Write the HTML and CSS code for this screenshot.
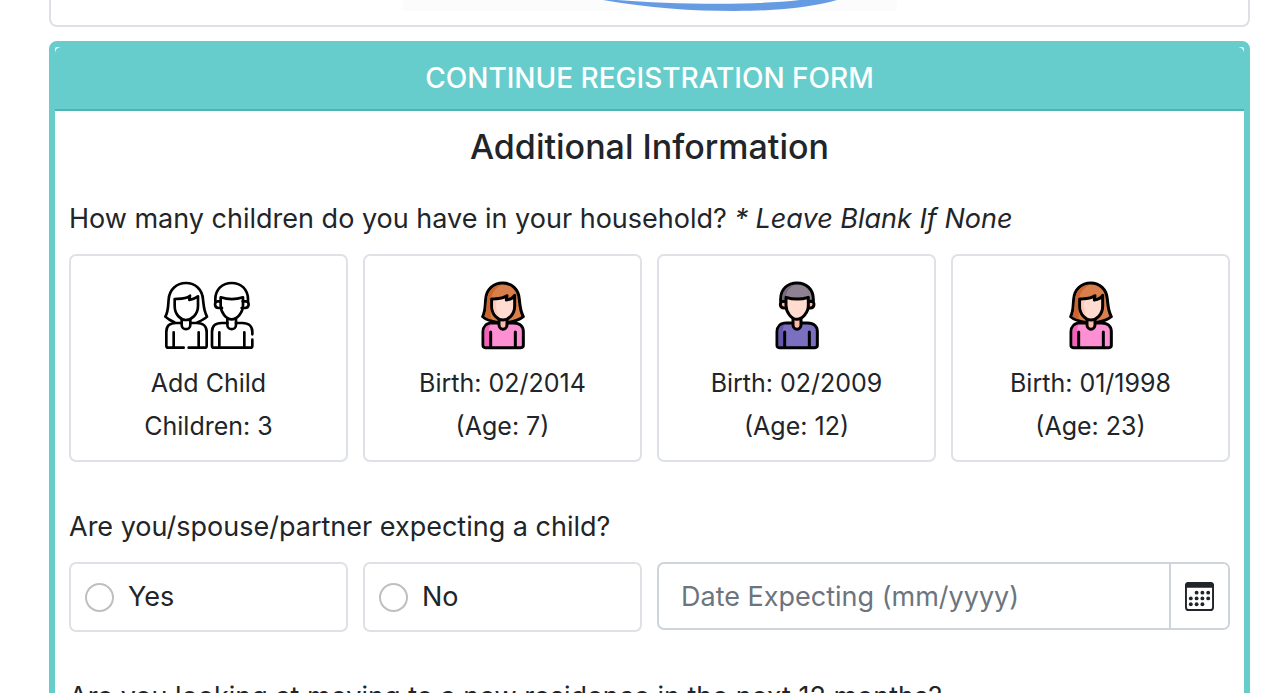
FILE: index.html
```html
<!DOCTYPE html>
<html lang="en">
<head>
  <meta charset="UTF-8">
  <meta name="viewport" content="width=device-width, initial-scale=1.0">
  <title>Continue Registration Form</title>
  <link rel="stylesheet" href="styles.css">
</head>
<body>
  <svg class="sprite" aria-hidden="true">
    <symbol id="girl" viewBox="0 0 132 210">
      <g stroke="#000" stroke-width="9" stroke-linecap="round" stroke-linejoin="round">
        <path fill="#d97f4c" d="M54 128 C34 125 16 120 5 110 C14 92 12 75 14 58 C16 28 38 9 65 9 C92 9 113 28 115 58 C117 75 117 92 127 110 C115 120 98 125 78 128 Z"/>
        <path fill="#c9662f" stroke="none" d="M29 118 C20 116 14 113 10 109 C18 92 16 75 18 58 C20 34 36 15 62 14 C42 24 30 42 29 62 Z"/>
        <path fill="#ff8fd3" d="M54 129 H34 C16 129 6 140 6 155 V196 Q6 203 13 203 H120 Q127 203 127 196 V155 C127 140 116 129 98 129 H78"/>
        <path fill="#f75fbd" stroke="none" d="M11 155 C11 143 20 134 32 133 C25 138 23 147 24 155 V198 H11 Z"/>
        <path fill="#ffb9a8" d="M54 115 V134 C54 152 78 152 78 134 V115"/>
        <path fill="#ffdccf" d="M32 57 V78 C32 104 50 120 66 120 C82 120 101 104 101 78 V46 C96 54 88 58 76 60 L78 47 C66 57 50 56 32 57 Z"/>
        <path fill="#ffc9b8" stroke="none" d="M37 62 H46 C44 80 46 98 54 110 C42 104 37 92 37 78 Z"/>
        <path fill="none" d="M29 156 V202 M103 156 V202"/>
      </g>
    </symbol>
    <symbol id="boy" viewBox="0 0 132 210">
      <g stroke="#000" stroke-width="9" stroke-linecap="round" stroke-linejoin="round">
        <path fill="#ffb9a8" d="M33 64 H24 C13 64 13 84 27 84 H37 M99 64 H109 C120 64 120 84 106 84 H96"/>
        <path fill="#8d8192" d="M33 64 H17 V58 C17 28 38 9 66 9 C94 9 115 28 115 58 V64 H99 Z"/>
        <path fill="#756a7c" stroke="none" d="M21 58 C21 34 36 16 58 14 C42 24 34 36 31 52 L30 60 H21 Z"/>
        <path fill="#7b6fc0" d="M54 129 H34 C16 129 6 140 6 155 V196 Q6 203 13 203 H120 Q127 203 127 196 V155 C127 140 116 129 98 129 H78"/>
        <path fill="#6557ad" stroke="none" d="M11 155 C11 143 20 134 32 133 C25 138 23 147 24 155 V198 H11 Z"/>
        <path fill="#ffb9a8" d="M54 113 V134 C54 152 78 152 78 134 V113"/>
        <path fill="#ffdccf" d="M33 52 V76 C33 98 50 118 66 118 C82 118 100 98 100 76 V52 C78 59 55 59 33 52 Z"/>
        <path fill="none" d="M29 156 V202 M103 156 V202"/>
      </g>
    </symbol>
    <symbol id="children" viewBox="0 0 270 210">
      <g fill="none" stroke="#000" stroke-width="8" stroke-linecap="round" stroke-linejoin="round">
        <path d="M31 127 C20 122 12 118 4 110 C14 92 12 75 14 58 C16 28 38 9 66 9 C94 9 115 28 117 58 C119 75 119 92 129 110 C121 118 112 122 101 127"/>
        <path d="M32 57 V78 C32 104 50 120 66 120 C82 120 102 104 102 78 V49 C96 54 88 58 76 60 L78 47 C66 57 50 56 32 57 Z"/>
        <path d="M53 117 V134 C53 152 79 152 79 134 V117"/>
        <path d="M53 129 H36 C16 129 7 140 7 155 V197 Q7 203 13 203 H59 M74 203 H122 Q128 203 128 197 V155 C128 140 118 129 98 129 H79"/>
        <path d="M29 157 V203 M104 157 V203"/>
        <g transform="translate(137 0)">
          <path d="M33 64 H24 C13 64 13 84 27 84 H37 M99 64 H109 C120 64 120 84 106 84 H96"/>
          <path d="M17 64 V58 C17 28 38 9 66 9 C94 9 115 28 115 58 V64"/>
          <path d="M33 52 V76 C33 98 50 118 66 118 C82 118 100 98 100 76 V52 C78 59 55 59 33 52 Z"/>
          <path d="M53 116 V134 C53 152 79 152 79 134 V116"/>
          <path d="M53 129 H36 C16 129 7 140 7 155 V197 Q7 203 13 203 H122 Q128 203 128 197 V179 M128 163 V155 C128 140 118 129 98 129 H79"/>
          <path d="M29 157 V203 M104 157 V203"/>
        </g>
      </g>
    </symbol>
  </svg>

  <main class="container">
    <div class="card banner">
      <svg class="banner-art" viewBox="0 0 494 11" aria-hidden="true">
        <path fill="#659be2" d="M200 0 C245 8 290 11 332 11 C375 11 410 7 434 0 H397 C345 6 265 4 214 0 Z"/>
      </svg>
    </div>

    <form class="card form-card">
      <h1 class="card-header">CONTINUE REGISTRATION FORM</h1>
      <div class="card-body">
        <h2 class="title">Additional Information</h2>

        <section class="group">
          <p class="question">How many children do you have in your household? <em>* Leave Blank If None</em></p>
          <div class="row">
            <button type="button" class="box child">
              <svg class="icon icon-wide"><use href="#children"/></svg>
              <span>Add Child</span>
              <span>Children: 3</span>
            </button>
            <button type="button" class="box child">
              <svg class="icon"><use href="#girl"/></svg>
              <span>Birth: 02/2014</span>
              <span>(Age: 7)</span>
            </button>
            <button type="button" class="box child">
              <svg class="icon"><use href="#boy"/></svg>
              <span>Birth: 02/2009</span>
              <span>(Age: 12)</span>
            </button>
            <button type="button" class="box child">
              <svg class="icon"><use href="#girl"/></svg>
              <span>Birth: 01/1998</span>
              <span>(Age: 23)</span>
            </button>
          </div>
        </section>

        <section class="group">
          <p class="question">Are you/spouse/partner expecting a child?</p>
          <div class="row">
            <label class="box option"><input type="radio" name="expecting" value="yes">Yes</label>
            <label class="box option"><input type="radio" name="expecting" value="no">No</label>
            <div class="date-group">
              <input type="text" class="date-input" name="date" aria-label="Date Expecting" placeholder="Date Expecting (mm/yyyy)">
              <button type="button" class="date-button" aria-label="Open calendar">
                <svg class="calendar" viewBox="0 0 30 30">
                  <rect x="1" y="1" width="28" height="28" rx="3" fill="none" stroke="#212529" stroke-width="2"/>
                  <path fill="#212529" d="M0 6 V4 Q0 0 4 0 H26 Q30 0 30 4 V6 Z"/>
                  <g fill="#212529">
                    <circle cx="12" cy="11" r="2"/><circle cx="18" cy="11" r="2"/><circle cx="24" cy="11" r="2"/>
                    <circle cx="6" cy="17" r="2"/><circle cx="12" cy="17" r="2"/><circle cx="18" cy="17" r="2"/><circle cx="24" cy="17" r="2"/>
                    <circle cx="6" cy="23" r="2"/><circle cx="12" cy="23" r="2"/><circle cx="18" cy="23" r="2"/>
                  </g>
                </svg>
              </button>
            </div>
          </div>
        </section>

        <section class="group">
          <p class="question">Are you looking at moving to a new residence in the next 12 months?</p>
        </section>
      </div>
    </form>
  </main>
</body>
</html>
```
FILE: styles.css
```css
* {
  box-sizing: border-box;
}
body {
  margin: 0;
  font-family: Inter, "Liberation Sans", sans-serif;
  font-size: 27px;
  line-height: 42px;
  color: #212529;
  background-color: #fff;
}
h1, h2, p {
  margin: 0;
}
.sprite {
  display: none;
}
.container {
  padding: 0 30px 0 49px;
}
.card {
  background-color: #fff;
  border: 2px solid #dfe0e6;
  border-radius: 8px;
}

/* banner */
.banner {
  display: flex;
  justify-content: center;
  padding-bottom: 14px;
  margin-bottom: 14px;
  border-top: none;
  border-top-left-radius: 0;
  border-top-right-radius: 0;
}
.banner-art {
  width: 494px;
  height: 11px;
  background-color: #fcfcfc;
}

/* form */
.form-card {
  border: 6px solid #66cdcc;
}
.card-header {
  padding: 10px 14px;
  border-bottom: 2px solid #52b3b4;
  border-radius: 6px 6px 0 0;
  background-color: #66cdcc;
  color: #fff;
  font-size: 28px;
  font-weight: 500;
  text-align: center;
}
.card-body {
  padding: 14px 14px 28px;
}
.title {
  margin-bottom: 29px;
  font-size: 34px;
  font-weight: 500;
  line-height: 44px;
  text-align: center;
}
.group {
  margin-bottom: 44px;
}
.question {
  margin-bottom: 14px;
}
.row {
  display: grid;
  grid-template-columns: repeat(4, 1fr);
  gap: 15px;
  align-items: start;
}
.box {
  border: 2px solid #dee2e6;
  border-radius: 7px;
  background-color: #fff;
}
.child {
  display: flex;
  flex-direction: column;
  align-items: center;
  padding: 24px 12px 12px;
  color: inherit;
  font-family: inherit;
  font-size: 25px;
  line-height: 43px;
  cursor: pointer;
}
.icon {
  width: 44px;
  height: 70px;
  margin-bottom: 12px;
}
.icon-wide {
  width: 90px;
}
.option {
  display: flex;
  align-items: center;
  gap: 14px;
  padding: 12px 14px;
}
.option input {
  appearance: none;
  width: 29px;
  height: 29px;
  margin: 0;
  border: 2px solid #bfbfbf;
  border-radius: 50%;
}
.option input:checked {
  border: 9px solid #0d6efd;
}
.date-group {
  grid-column: span 2;
  display: flex;
  height: 68px;
  border: 2px solid #ced4da;
  border-radius: 7px;
}
.date-input {
  flex: 1;
  min-width: 0;
  padding: 0 22px;
  border: none;
  border-radius: 7px;
  font-family: inherit;
  font-size: 27px;
  color: #212529;
}
.date-input::placeholder {
  color: #6c757d;
  opacity: 1;
}
.date-button {
  display: flex;
  align-items: center;
  padding: 0 14px;
  border: none;
  border-left: 2px solid #ced4da;
  border-radius: 0 5px 5px 0;
  background-color: #fff;
  cursor: pointer;
}
.calendar {
  width: 29px;
  height: 29px;
}
```
